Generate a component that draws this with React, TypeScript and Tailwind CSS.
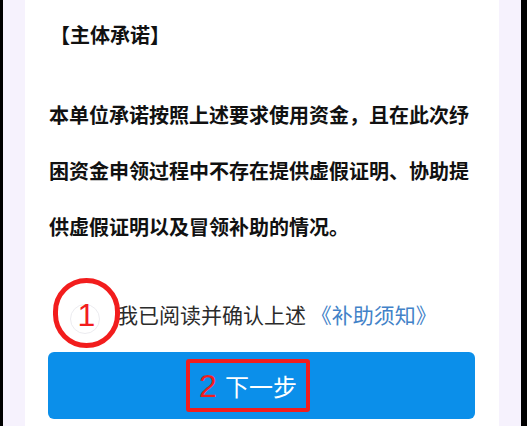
import React from "react";

const cjk = { fontFamily: '"Noto Sans CJK SC", "Noto Sans", sans-serif' };

export default function App() {
  return (
    <div className="w-[527px] h-[426px] bg-black flex overflow-hidden" style={cjk}>
      <div className="ml-[3px] w-[518px] h-full bg-[#f6f2fd] px-[22px] flex">
        <div className="w-[474px] h-full bg-white flex flex-col relative">
          <div className="pl-[25px] pt-[21px] text-[20px] leading-[28px] font-bold text-[#111]">
            【主体承诺】
          </div>
          <div className="pl-[24px] mt-[38px] text-[20px] leading-[56px] font-bold text-[#111] whitespace-nowrap">
            <div>本单位承诺按照上述要求使用资金，且在此次纾</div>
            <div>困资金申领过程中不存在提供虚假证明、协助提</div>
            <div>供虚假证明以及冒领补助的情况。</div>
          </div>
          <div className="mt-[44px] h-[30px] flex items-center pl-[45px]">
            <div className="w-[30px] h-[30px] mt-[10px] rounded-full border border-[#ececf0] bg-white" />
            <div className="ml-[17px] text-[21px] leading-[30px] text-[#2b2b2b] whitespace-nowrap">
              我已阅读并确认上述 <span className="text-[#4282c8]">《补助须知》</span>
            </div>
          </div>
          <div className="mt-[23px] ml-[23px] w-[427px] h-[67px] rounded-[6px] bg-[#0b8fea] flex items-center justify-center">
            <div className="mr-[27px] w-[124px] h-[53px] border-[4px] border-[#f21d1d] rounded-[3px] flex items-center justify-center gap-[8px]">
              <span className="text-[32px] leading-none text-[#f21d1d]" style={{ fontFamily: '"Liberation Sans", sans-serif' }}>2</span>
              <span className="text-[24px] leading-none text-white">下一步</span>
            </div>
          </div>
          <div className="absolute left-[28px] top-[278px] w-[67px] h-[70px] rounded-full border-[5px] border-[#f21d1d] flex items-center justify-center">
            <span className="text-[32px] leading-none text-[#f21d1d] mt-[3px]" style={{ fontFamily: '"Liberation Sans", sans-serif' }}>1</span>
          </div>
        </div>
      </div>
    </div>
  );
}
